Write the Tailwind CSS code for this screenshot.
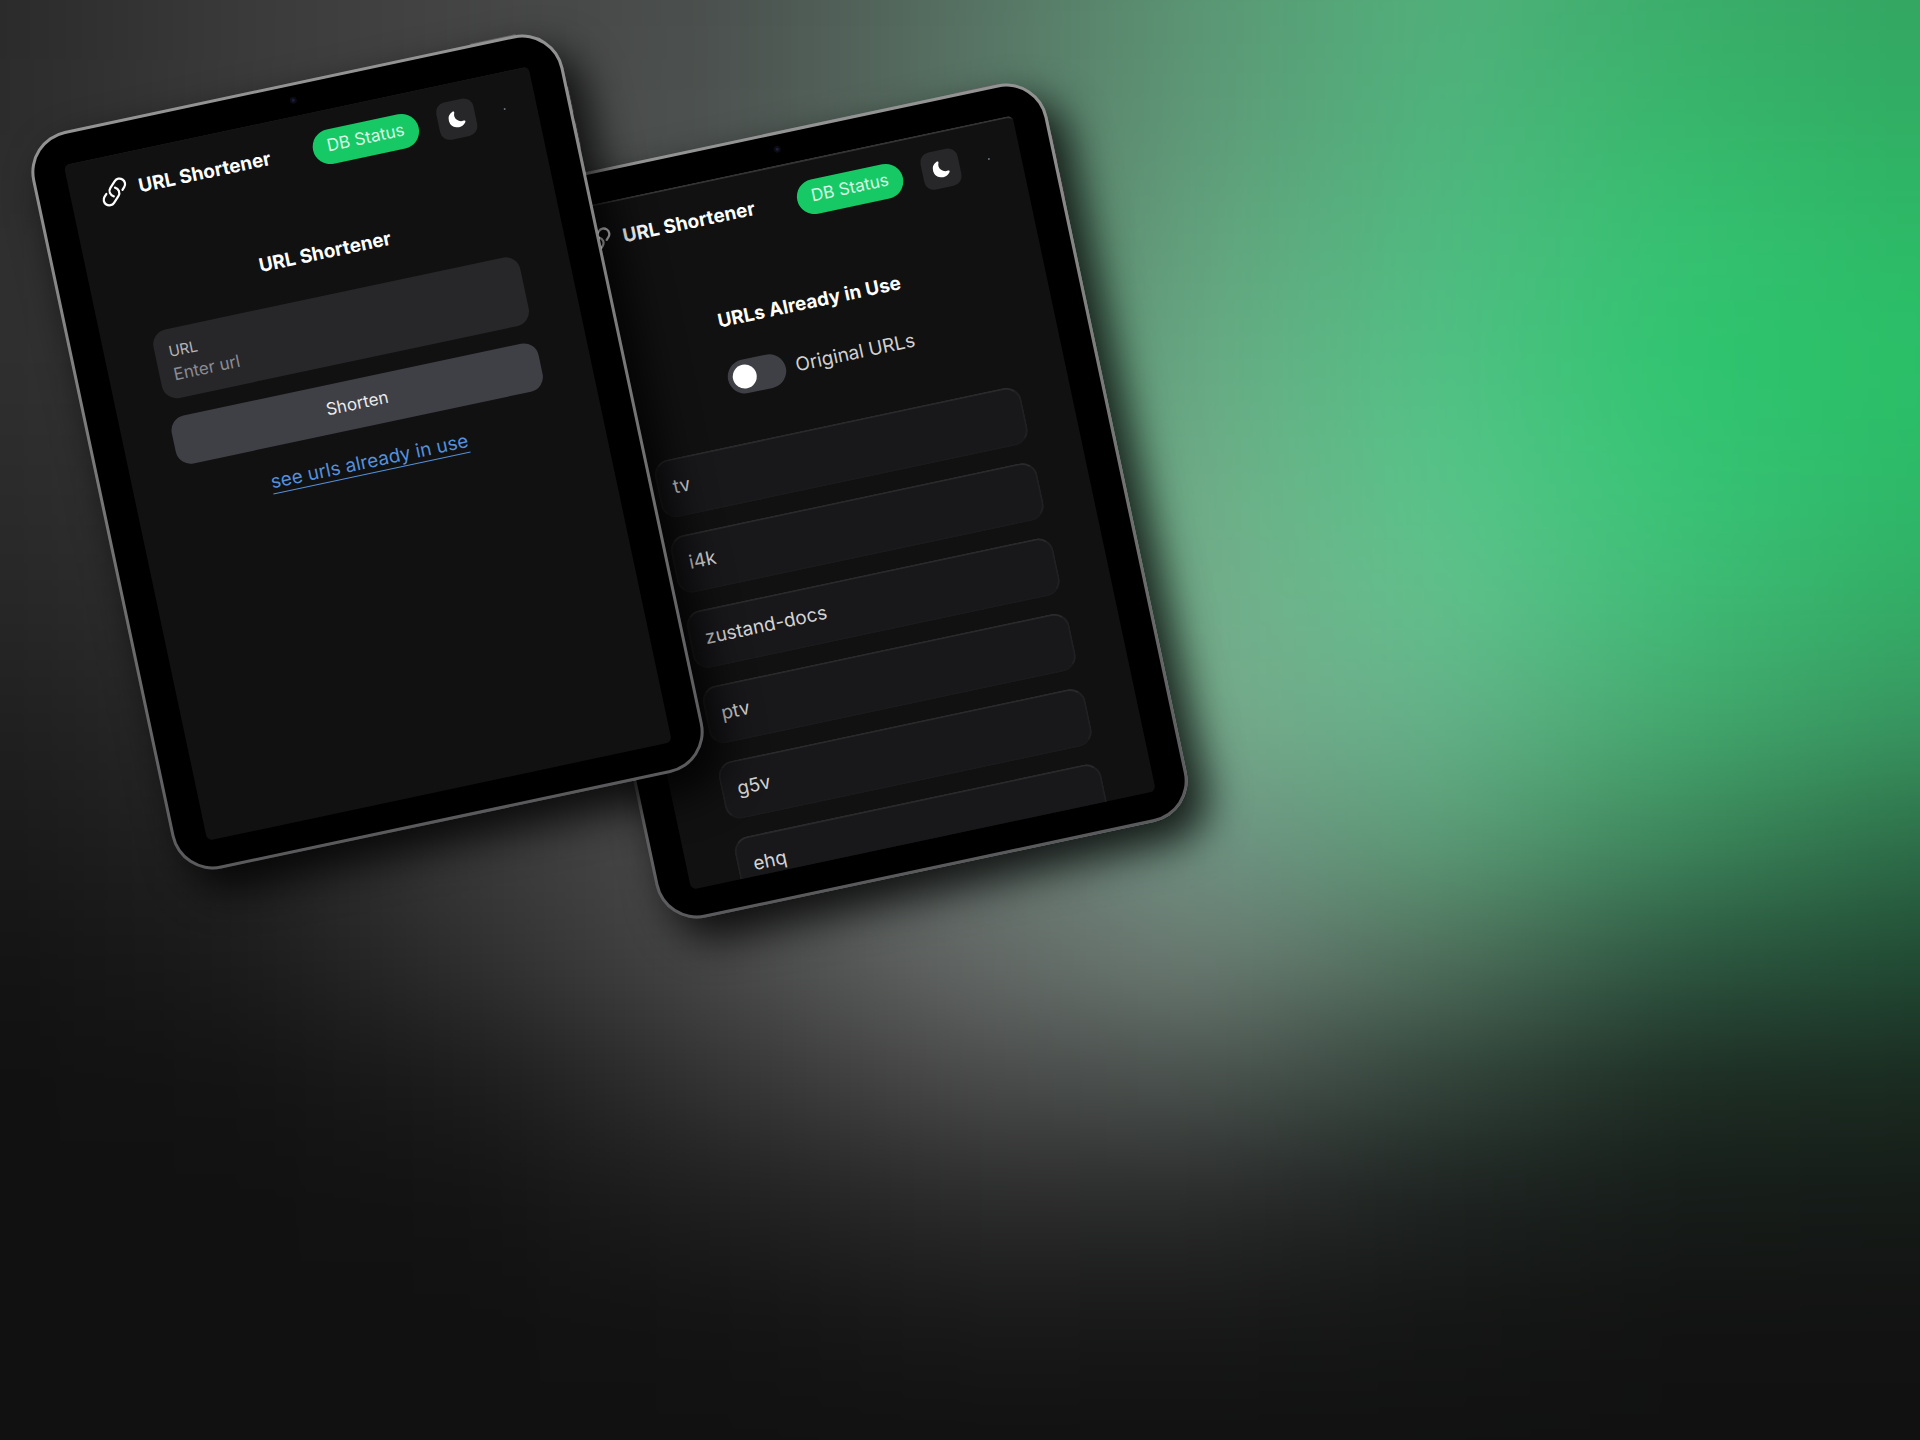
<!DOCTYPE html>
<html lang="en">
<head>
<meta charset="utf-8">
<meta name="viewport" content="width=device-width, initial-scale=1">
<title>URL Shortener</title>
<script src="https://cdn.jsdelivr.net/npm/@tailwindcss/browser@4"></script>
</head>
<body class="bg-[#111111] font-['Inter',sans-serif] text-[#ececec]">
<main class="relative min-h-screen overflow-hidden">

  <!-- Backdrop: one horizontal gradient per row, blended by a blur -->
  <svg id="backdrop" class="absolute inset-0 h-full w-full" viewBox="0 0 1568 1176" preserveAspectRatio="none" aria-hidden="true"></svg>

  <!-- Back tablet: list of URLs -->
  <section class="absolute top-[124px] left-[580px] h-[754px] w-[543px] -rotate-12" aria-label="URLs in use">
    <span class="absolute -top-px right-[39px] h-1 w-12 rounded-sm bg-[#6f6f6f]"></span>
    <span class="absolute top-[61px] -right-px h-7 w-1 rounded-sm bg-[#8a8a8a]"></span>
    <span class="absolute top-[96px] -right-px h-7 w-1 rounded-sm bg-[#8a8a8a]"></span>
    <div class="relative h-full rounded-[42px] bg-linear-to-b from-[#939393] via-[#757575] to-[#5a5a5d] p-[3px] shadow-[14px_22px_40px_2px_rgba(0,0,0,0.8)]">
      <div class="h-full rounded-[39px] bg-black px-[31px] pt-[30px] pb-[27px]">
        <span class="absolute top-[14px] left-1/2 grid size-[7px] -translate-x-1/2 place-items-center rounded-full bg-[#0b0b14]"><span class="size-[3px] rounded-full bg-[#1d1d3c]"></span></span>
        <div class="h-full overflow-hidden rounded-md border-t-2 border-[#333333] bg-[#111111]">
          <header class="flex h-[72px] items-center justify-between pr-[31px] pl-[29px]">
            <a href="#" class="flex items-center gap-[10px] text-[19px] font-bold text-white">
              <svg class="size-[30px]" viewBox="0 0 24 24" fill="none" stroke="currentColor" stroke-width="1.8" stroke-linecap="round" stroke-linejoin="round"><path d="M13.19 8.688a4.5 4.5 0 0 1 1.242 7.244l-4.5 4.5a4.5 4.5 0 0 1-6.364-6.364l1.757-1.757m13.35-.622 1.757-1.757a4.5 4.5 0 0 0-6.364-6.364l-4.5 4.5a4.5 4.5 0 0 0 1.242 7.244"/></svg>
              URL Shortener
            </a>
            <div class="flex items-center">
              <button type="button" class="h-[35px] w-[108px] rounded-full bg-[#17c964] text-[17px] text-[#d9f7e5]">DB Status</button>
              <button type="button" aria-label="Toggle theme" class="ml-[20px] grid size-[38px] place-items-center rounded-[10px] bg-[#27272a] text-white"><svg class="size-5" viewBox="0 0 24 24" fill="currentColor"><path d="M21.53 15.93c-.16-.27-.61-.69-1.73-.49a8.46 8.46 0 01-1.88.13 8.409 8.409 0 01-5.91-2.82 8.068 8.068 0 01-1.44-8.66c.44-1.01.13-1.54-.09-1.76s-.77-.55-1.83-.11a10.318 10.318 0 00-6.32 10.21 10.475 10.475 0 007.04 8.99 10 10 0 002.89.55c.16.01.32.02.48.02a10.5 10.5 0 008.47-4.27c.67-.93.49-1.519.32-1.79z"/></svg></button>
              <span class="ml-[29px] size-[2px] rounded-full bg-[#6b7280]"></span>
            </div>
          </header>
          <div class="flex flex-col px-[50px] pt-[52px]">
            <h1 class="text-center text-[19px] leading-[30px] font-bold text-white">URLs Already in Use</h1>
            <label class="mt-[27px] flex h-[34px] items-center justify-center gap-[10px] text-[19px] text-[#d0d0d0]">
              <span class="relative flex h-[34px] w-[59px] items-center rounded-full bg-[#3f3f46] px-[5px]">
                <input type="checkbox" role="switch" class="absolute inset-0 h-full w-full appearance-none rounded-full">
                <span class="size-6 rounded-full bg-white"></span>
              </span>
              Original URLs
            </label>
            <ul class="mt-[48px] flex flex-col gap-[18px] text-[19px] text-[#d4d4d4]">
              <li class="flex h-[59px] shrink-0 items-center rounded-[16px] border-2 border-[#202022] border-t-[#29292b] border-b-[#1a1a1c] bg-[#18181b] px-[14px]">tv</li>
              <li class="flex h-[59px] shrink-0 items-center rounded-[16px] border-2 border-[#202022] border-t-[#29292b] border-b-[#1a1a1c] bg-[#18181b] px-[14px]">i4k</li>
              <li class="flex h-[59px] shrink-0 items-center rounded-[16px] border-2 border-[#202022] border-t-[#29292b] border-b-[#1a1a1c] bg-[#18181b] px-[14px]">zustand-docs</li>
              <li class="flex h-[59px] shrink-0 items-center rounded-[16px] border-2 border-[#202022] border-t-[#29292b] border-b-[#1a1a1c] bg-[#18181b] px-[14px]">ptv</li>
              <li class="flex h-[59px] shrink-0 items-center rounded-[16px] border-2 border-[#202022] border-t-[#29292b] border-b-[#1a1a1c] bg-[#18181b] px-[14px]">g5v</li>
              <li class="flex h-[59px] shrink-0 items-center rounded-[16px] border-2 border-[#202022] border-t-[#29292b] border-b-[#1a1a1c] bg-[#18181b] px-[14px]">ehq</li>
            </ul>
          </div>
        </div>
      </div>
    </div>
  </section>

  <!-- Front tablet: shorten form -->
  <section class="absolute top-[75px] left-[96px] h-[754px] w-[543px] -rotate-12" aria-label="Shorten a URL">
    <span class="absolute -top-px right-[39px] h-1 w-12 rounded-sm bg-[#6f6f6f]"></span>
    <span class="absolute top-[61px] -right-px h-7 w-1 rounded-sm bg-[#8a8a8a]"></span>
    <span class="absolute top-[96px] -right-px h-7 w-1 rounded-sm bg-[#8a8a8a]"></span>
    <div class="relative h-full rounded-[42px] bg-linear-to-b from-[#939393] via-[#757575] to-[#5a5a5d] p-[3px] shadow-[14px_22px_40px_2px_rgba(0,0,0,0.8)]">
      <div class="h-full rounded-[39px] bg-black px-[31px] pt-[30px] pb-[27px]">
        <span class="absolute top-[14px] left-1/2 grid size-[7px] -translate-x-1/2 place-items-center rounded-full bg-[#0b0b14]"><span class="size-[3px] rounded-full bg-[#1d1d3c]"></span></span>
        <div class="h-full overflow-hidden rounded-md border-t border-[#161616] bg-[#111111]">
          <header class="flex h-[72px] items-center justify-between pr-[31px] pl-[29px]">
            <a href="#" class="flex items-center gap-[10px] text-[19px] font-bold text-white">
              <svg class="size-[30px]" viewBox="0 0 24 24" fill="none" stroke="currentColor" stroke-width="1.8" stroke-linecap="round" stroke-linejoin="round"><path d="M13.19 8.688a4.5 4.5 0 0 1 1.242 7.244l-4.5 4.5a4.5 4.5 0 0 1-6.364-6.364l1.757-1.757m13.35-.622 1.757-1.757a4.5 4.5 0 0 0-6.364-6.364l-4.5 4.5a4.5 4.5 0 0 0 1.242 7.244"/></svg>
              URL Shortener
            </a>
            <div class="flex items-center">
              <button type="button" class="h-[35px] w-[108px] rounded-full bg-[#17c964] text-[17px] text-[#d9f7e5]">DB Status</button>
              <button type="button" aria-label="Toggle theme" class="ml-[20px] grid size-[38px] place-items-center rounded-[10px] bg-[#27272a] text-white"><svg class="size-5" viewBox="0 0 24 24" fill="currentColor"><path d="M21.53 15.93c-.16-.27-.61-.69-1.73-.49a8.46 8.46 0 01-1.88.13 8.409 8.409 0 01-5.91-2.82 8.068 8.068 0 01-1.44-8.66c.44-1.01.13-1.54-.09-1.76s-.77-.55-1.83-.11a10.318 10.318 0 00-6.32 10.21 10.475 10.475 0 007.04 8.99 10 10 0 002.89.55c.16.01.32.02.48.02a10.5 10.5 0 008.47-4.27c.67-.93.49-1.519.32-1.79z"/></svg></button>
              <span class="ml-[29px] size-[2px] rounded-full bg-[#6b7280]"></span>
            </div>
          </header>
          <form class="flex flex-col px-[50px] pt-[52px]">
            <h1 class="text-center text-[19px] leading-[30px] font-bold text-white">URL Shortener</h1>
            <div class="mt-[27px] flex h-[70px] flex-col justify-center rounded-[15px] bg-[#27272a] px-[14px]">
              <label for="url" class="text-[15px] leading-[22px] text-[#b4b4bb]">URL</label>
              <input id="url" type="text" placeholder="Enter url" class="w-full bg-transparent text-[17px] leading-6 placeholder-[#8b8b93] outline-none">
            </div>
            <button type="button" class="mt-[18px] h-[49px] rounded-[15px] bg-[#3f3f46] text-[17px] text-[#ececec]">Shorten</button>
            <a href="#" class="mt-5 self-center text-[19px] leading-[30px] text-[#5490dc] underline underline-offset-[5px]">see urls already in use</a>
          </form>
        </div>
      </div>
    </div>
  </section>
</main>

<script>
  // Each row: y, then colours at nine evenly spaced columns
  const rows = [
    [0,    '2a2a2a 3a3a3a 454545 4b504e 567062 5b9674 51b07b 3bad6b 33a562'],
    [98,   '2b2b2b 3a3a3a 464646 4d5250 587264 5f9a78 4fb47d 37b76b 30ae63'],
    [196,  '2e2e2e 393939 464646 505553 587264 64a37e 4fba80 35c171 2cb966'],
    [294,  '2e2e2e 383838 454545 525755 5c7868 68aa84 51c084 2fc56f 2bbf67'],
    [392,  '2a2a2a 353535 444444 545855 5f7f6e 6fad88 57c488 37c475 2cb967'],
    [490,  '262626 303030 404040 505250 607b6d 74ad8b 61c08c 3fbb76 32ac65'],
    [588,  '1f1f1f 2a2a2a 3b3b3b 4b4b4b 62756b 77a98b 64b189 43a96d 37955f'],
    [686,  '191919 232323 3a3a3a 4b4b4b 65706b 719384 5b9c76 3c865b 2d6e48'],
    [784,  '131313 1b1b1b 303030 484848 646866 6b7c73 4f6e5b 2d5640 204a33'],
    [882,  '111111 131313 1c1c1c 343434 494949 4a524e 32433a 1e2d24 1a2a20'],
    [980,  '111111 111111 131313 1f1f1f 2b2b2b 2a2b2b 1d2220 161c19 151b17'],
    [1078, '111111 111111 111111 131313 191919 181818 141615 121212 121212'],
    [1176, '111111 111111 111111 111111 111111 111111 111111 111111 111111']
  ];
  const defs = rows.map(([y, line], i) => `<linearGradient id="r${i}" gradientUnits="userSpaceOnUse" x1="0" y1="0" x2="1568" y2="0">${line.split(' ').map((c, k) => `<stop offset="${k / 8}" stop-color="#${c}"/>`).join('')}</linearGradient>`).join('');
  const bars = rows.map(([y], i) => {
    const top = i === 0 ? -300 : y - 49, bottom = i === rows.length - 1 ? 1476 : y + 50;
    return `<rect x="-200" y="${top}" width="1968" height="${bottom - top}" fill="url(#r${i})"/>`;
  }).join('');
  document.getElementById('backdrop').innerHTML =
    `<defs>${defs}<filter id="soft" filterUnits="userSpaceOnUse" x="-200" y="-300" width="1968" height="1776" color-interpolation-filters="sRGB"><feGaussianBlur stdDeviation="40 42"/></filter></defs><g filter="url(#soft)">${bars}</g>`;
</script>
</body>
</html>
